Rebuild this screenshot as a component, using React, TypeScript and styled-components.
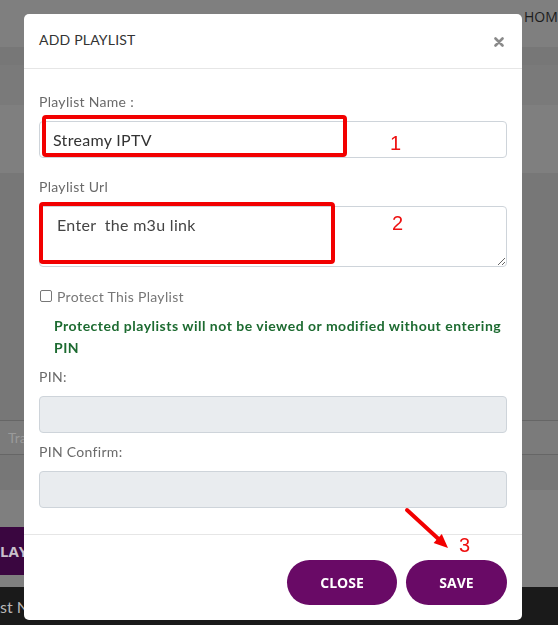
import React from 'react';
import styled, { createGlobalStyle } from 'styled-components';

const GlobalStyle = createGlobalStyle`
  html, body {
    margin: 0;
    padding: 0;
    height: 100%;
    overflow: hidden;
  }
  body {
    font-family: Lato, "Open Sans", sans-serif;
    background: #7f7f7f;
  }
`;

// dimmed page behind the dialog
const Page = styled.div`
  height: 625px;
  display: flex;
  flex-direction: column;
  overflow: hidden;
`;

const Band = styled.div<{ $h: number; $bg: string }>`
  height: ${p => p.$h}px;
  flex: none;
  background: ${p => p.$bg};
`;

const TopBar = styled.div`
  height: 47px;
  flex: none;
  background: #7f7f7f;
  display: flex;
  justify-content: flex-end;
  align-items: flex-start;
  padding-top: 7px;
  box-sizing: border-box;
`;

const NavLink = styled.span`
  display: flex;
  align-items: center;
  gap: 4px;
  width: 38px;
  font-family: "Open Sans", sans-serif;
  font-size: 14px;
  color: #1c1c1c;
  white-space: nowrap;
`;

const SearchRow = styled.div`
  height: 35px;
  flex: none;
  background: #7b7b7b;
  border-top: 1px solid #666;
  border-bottom: 1px solid #666;
  box-sizing: border-box;
  display: flex;
  align-items: center;
  padding-left: 8px;
  font-size: 14px;
  color: #9a9a9a;
`;

const ActionRow = styled.div`
  height: 48px;
  flex: none;
  background: #7f7f7f;
  display: flex;
`;

const PurpleBar = styled.div`
  width: 220px;
  background: #3a0640;
  display: flex;
  align-items: center;
  font-family: "Open Sans", sans-serif;
  font-weight: 700;
  font-size: 15px;
  color: #c9c0cb;
  white-space: nowrap;
`;

const TableHead = styled.div`
  height: 38px;
  flex: none;
  background: #1a1a1a;
  display: flex;
  align-items: center;
  font-size: 16px;
  color: #b8b8b8;
  white-space: nowrap;
`;

// dialog
const Overlay = styled.div`
  position: fixed;
  inset: 0;
  padding: 14px 0 0 24px;
`;

const Modal = styled.div`
  position: relative;
  width: 498px;
  height: 606px;
  background: #fff;
  border-radius: 5px;
  display: flex;
  flex-direction: column;
`;

const Header = styled.div`
  height: 55px;
  box-sizing: border-box;
  border-bottom: 1px solid #e6e6e6;
  padding: 0 18px 4px 15px;
  display: flex;
  align-items: center;
  justify-content: space-between;
`;

const Title = styled.h4`
  margin: 0;
  font-size: 14px;
  font-weight: 400;
  color: #333;
  letter-spacing: 0.2px;
`;

const CloseX = styled.button`
  border: 0;
  background: none;
  padding: 0;
  display: flex;
  margin-top: 6px;
`;

const Body = styled.div`
  padding: 23px 15px 26px;
  display: flex;
  flex-direction: column;
`;

const Label = styled.label<{ $gap?: number }>`
  display: block;
  height: 20px;
  line-height: 20px;
  font-size: 14px;
  letter-spacing: 0.3px;
  color: #6a6a6a;
  margin-bottom: 9px;
  margin-top: ${p => p.$gap ?? 0}px;
`;

const FieldWrap = styled.div`
  position: relative;
`;

const TextInput = styled.input`
  display: block;
  width: 100%;
  height: 37px;
  box-sizing: border-box;
  border: 1px solid #ced4da;
  border-radius: 4px;
  padding: 0 13px;
  font-family: Lato, sans-serif;
  font-size: 16px;
  letter-spacing: 0.3px;
  color: #333;
  background: ${p => (p.disabled ? '#e9ecef' : '#fff')};
  outline: none;
`;

const UrlArea = styled.textarea`
  display: block;
  width: 100%;
  height: 61px;
  box-sizing: border-box;
  border: 1px solid #ced4da;
  border-radius: 4px;
  padding: 8px 17px;
  font-family: Lato, sans-serif;
  font-size: 16px;
  letter-spacing: 0.3px;
  color: #444;
  resize: vertical;
  outline: none;
`;

const Mark = styled.div<{ $l: number; $t: number; $w: number; $h: number }>`
  position: absolute;
  left: ${p => p.$l}px;
  top: ${p => p.$t}px;
  width: ${p => p.$w}px;
  height: ${p => p.$h}px;
  box-sizing: border-box;
  border: 4px solid #f20000;
  border-radius: 4px;
  pointer-events: none;
`;

const Num = styled.span<{ $l: number; $t: number }>`
  position: absolute;
  left: ${p => p.$l}px;
  top: ${p => p.$t}px;
  font-family: "Liberation Sans", sans-serif;
  font-size: 20px;
  line-height: 23px;
  color: #ee1111;
`;

const CheckRow = styled.label`
  margin-top: 19px;
  height: 20px;
  display: flex;
  align-items: center;
  gap: 5px;
  padding-left: 1px;
  font-size: 14px;
  letter-spacing: 0.3px;
  color: #777;
`;

const Box = styled.span`
  width: 12px;
  height: 12px;
  box-sizing: border-box;
  border: 1.5px solid #777;
  border-radius: 2px;
`;

const Notice = styled.p`
  margin: 9px 0 8px;
  padding-left: 15px;
  font-size: 14px;
  font-weight: 700;
  line-height: 22px;
  letter-spacing: 0.5px;
  color: #1d6b31;
`;

const Footer = styled.div`
  border-top: 1px solid #e6e6e6;
  padding: 25px 15px 15px;
  display: flex;
  justify-content: flex-end;
  gap: 9px;
`;

const PillButton = styled.button<{ $w: number }>`
  width: ${p => p.$w}px;
  height: 45px;
  border: 0;
  border-radius: 23px;
  background: #690a66;
  color: #fff;
  font-family: "Open Sans", sans-serif;
  font-weight: 700;
  font-size: 14px;
`;

const Arrow = styled.svg`
  position: absolute;
  left: 375px;
  top: 488px;
`;

function App() {
  return (
    <>
      <GlobalStyle />
      <Page>
        <TopBar>
          <NavLink>
            <svg width="7" height="7" viewBox="0 0 10 10">
              <path d="M1 2 L9 2 L5 8 Z" fill="#1c1c1c" />
            </svg>
            HOME
          </NavLink>
        </TopBar>
        <Band $h={18} $bg="#777" />
        <Band $h={40} $bg="#7a7a7a" />
        <Band $h={68} $bg="#7f7f7f" />
        <Band $h={247} $bg="#777" />
        <SearchRow>Track</SearchRow>
        <Band $h={35} $bg="#777" />
        <Band $h={37} $bg="#7f7f7f" />
        <ActionRow>
          <PurpleBar>LAYLIST</PurpleBar>
        </ActionRow>
        <Band $h={12} $bg="#7f7f7f" />
        <TableHead>st Name</TableHead>
      </Page>

      <Overlay>
        <Modal>
          <Header>
            <Title>ADD PLAYLIST</Title>
            <CloseX aria-label="close">
              <svg width="10" height="10" viewBox="0 0 10 10">
                <path d="M1.5 1.5 L8.5 8.5 M8.5 1.5 L1.5 8.5" stroke="#8a8a8a" strokeWidth="2.6" strokeLinecap="round" />
              </svg>
            </CloseX>
          </Header>

          <Body>
            <Label>Playlist Name :</Label>
            <FieldWrap>
              <TextInput defaultValue="Streamy IPTV" readOnly />
              <Mark $l={3} $t={-6} $w={305} $h={42} />
              <Num $l={351} $t={11}>1</Num>
            </FieldWrap>

            <Label $gap={19}>Playlist Url</Label>
            <FieldWrap>
              <UrlArea defaultValue="Enter  the m3u link" readOnly />
              <Mark $l={0} $t={-4} $w={296} $h={62} />
              <Num $l={353} $t={6}>2</Num>
            </FieldWrap>

            <CheckRow>
              <Box />
              Protect This Playlist
            </CheckRow>
            <Notice>
              Protected playlists will not be viewed or modified without entering PIN
            </Notice>

            <Label>PIN:</Label>
            <TextInput disabled />
            <Label $gap={9}>PIN Confirm:</Label>
            <TextInput disabled />
          </Body>

          <Footer>
            <PillButton $w={110}>CLOSE</PillButton>
            <PillButton $w={101}>SAVE</PillButton>
          </Footer>

          <Arrow width="60" height="55" viewBox="0 0 60 55">
            <line x1="8" y1="8" x2="39" y2="36.5" stroke="#f20000" strokeWidth="4" strokeLinecap="round" />
            <polygon points="34.6,40.9 42.8,32.1 49,46" fill="#f20000" />
          </Arrow>
          <Num $l={435} $t={520}>3</Num>
        </Modal>
      </Overlay>
    </>
  );
}

export default App;
